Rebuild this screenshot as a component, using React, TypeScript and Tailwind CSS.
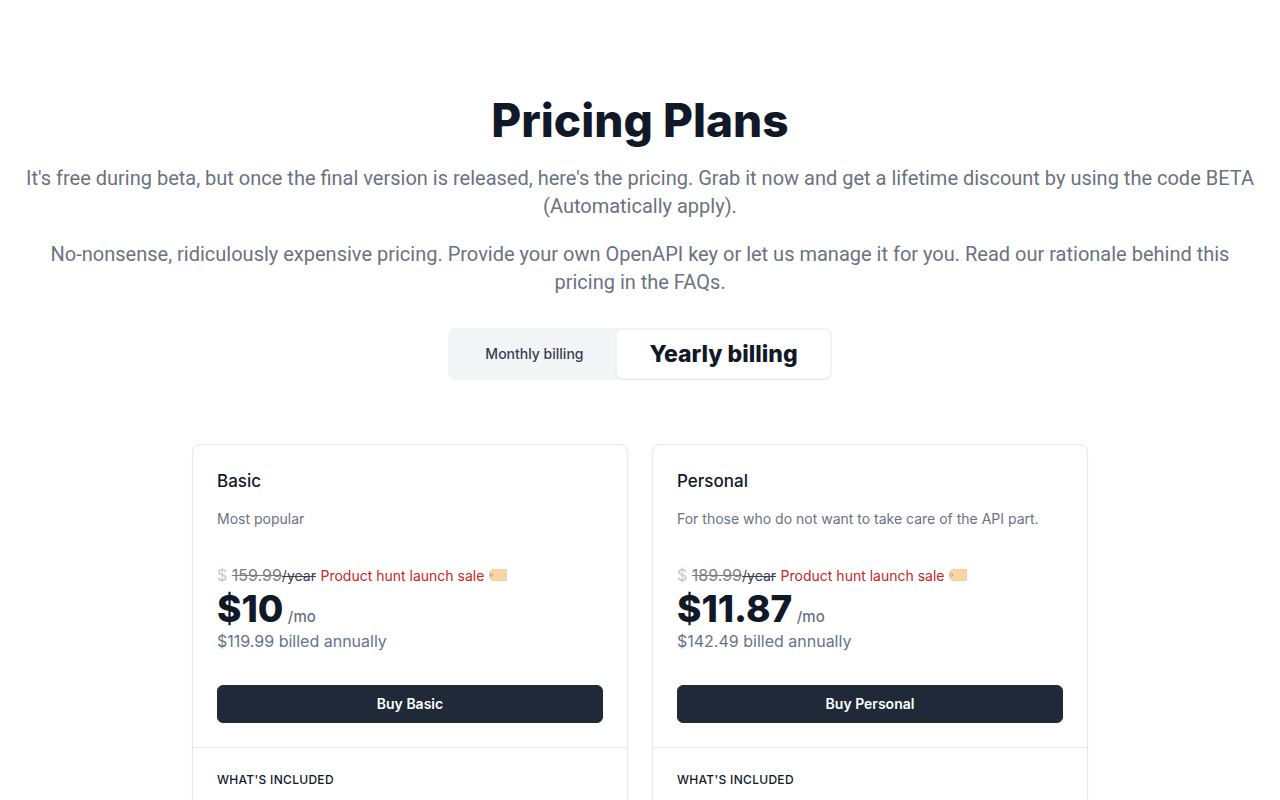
import { useState } from 'react';

type Billing = 'monthly' | 'yearly';

type Plan = {
  name: string;
  description: string;
  oldPrice: string;
  price: string;
  total: string;
};

const plans: Plan[] = [
  { name: 'Basic', description: 'Most popular', oldPrice: '159.99', price: '$10', total: '$119.99' },
  {
    name: 'Personal',
    description: 'For those who do not want to take care of the API part.',
    oldPrice: '189.99',
    price: '$11.87',
    total: '$142.49',
  },
];

function TagIcon() {
  return (
    <svg aria-hidden="true" viewBox="0 0 18 12" className="mb-1 inline-block h-3 w-[18px]">
      <path d="M3 0.5H17.5V11.5H3L0.5 9V3Z" fill="#f9d5a5" stroke="#f7cf9b" strokeLinejoin="round" />
      <circle cx="2.5" cy="6" r="1.2" fill="#fff3e0" stroke="#a08a70" strokeWidth="0.8" />
    </svg>
  );
}

function PlanCard({ plan }: { plan: Plan }) {
  return (
    <div className="divide-y divide-[#e5e7eb] rounded-lg border border-[#e5e7eb] shadow-xs">
      <div className="p-6">
        <h2 className="text-[17px] leading-6 font-medium text-[#111827]">{plan.name}</h2>
        <p className="mt-4 text-sm text-[#6b7280]">{plan.description}</p>
        <div className="mt-8">
          <p className="leading-7">
            <span className="text-[#c4c7cc]">$ </span>
            <span className="text-[#7b7b7b] line-through">{plan.oldPrice}</span>
            <span className="text-sm text-[#374151] line-through">/year</span>{' '}
            <span className="text-sm text-[#cb2424]">Product hunt launch sale</span> <TagIcon />
          </p>
          <p>
            <span className="text-[37px] leading-10 font-extrabold text-[#111827]">{plan.price}</span>{' '}
            <span className="text-[15px] leading-6 font-medium text-[#6b7280]">/mo</span>
          </p>
          <p className="text-base text-[#64748b]">{plan.total} billed annually</p>
        </div>
        <button
          type="button"
          className="mt-8 block w-full rounded-md border border-[#1f2937] bg-[#1f2937] py-2 text-center text-sm font-semibold text-white hover:bg-[#111827]"
        >
          Buy {plan.name}
        </button>
      </div>
      <div className="px-6 pt-6 pb-8">
        <h3 className="text-xs font-medium tracking-wide text-[#111827] uppercase">What's included</h3>
      </div>
    </div>
  );
}

export default function App() {
  const [billing, setBilling] = useState<Billing>('yearly');
  const options: { id: Billing; label: string }[] = [
    { id: 'monthly', label: 'Monthly billing' },
    { id: 'yearly', label: 'Yearly billing' },
  ];

  return (
    <main className="bg-white px-6 py-24 font-['Inter',sans-serif]">
      <div className="flex flex-col items-center text-center">
        <h1 className="text-[46px] leading-12 font-extrabold text-[#111827]">Pricing Plans</h1>
        <p className="mt-5 font-['Roboto',sans-serif] text-xl text-[#6b7280]">
          It's free during beta, but once the final version is released, here's the pricing. Grab it now and get a
          lifetime discount by using the code BETA (Automatically apply).
        </p>
        <p className="mt-5 font-['Roboto',sans-serif] text-xl text-[#6b7280]">
          No-nonsense, ridiculously expensive pricing. Provide your own OpenAPI key or let us manage it for you. Read
          our rationale behind this pricing in the FAQs.
        </p>
        <div className="mt-8 flex rounded-lg bg-[#f3f4f6] py-px pr-px pl-1">
          {options.map((option) => (
            <button
              key={option.id}
              type="button"
              onClick={() => setBilling(option.id)}
              className={`rounded-md border px-8 py-2 whitespace-nowrap ${
                billing === option.id
                  ? 'border-[#f3f4f6] bg-white text-[23px] leading-8 font-extrabold text-[#111827] shadow-xs'
                  : 'border-transparent text-sm font-medium text-[#374151]'
              }`}
            >
              {option.label}
            </button>
          ))}
        </div>
      </div>
      <div className="mx-auto mt-16 grid max-w-4xl gap-6 sm:grid-cols-2">
        {plans.map((plan) => (
          <PlanCard key={plan.name} plan={plan} />
        ))}
      </div>
    </main>
  );
}
